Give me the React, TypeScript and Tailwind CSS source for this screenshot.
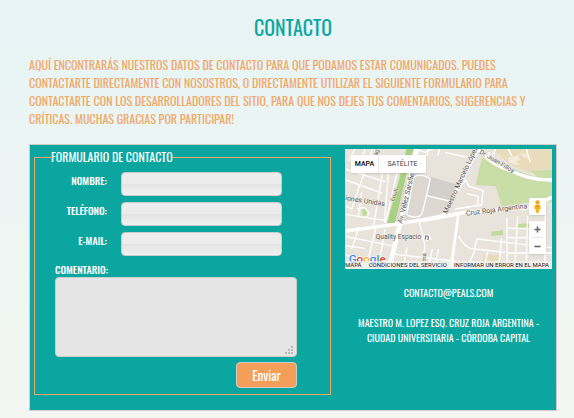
const fields = [
  { id: 'nombre', label: 'NOMBRE:', type: 'text' },
  { id: 'telefono', label: 'TELÉFONO:', type: 'tel' },
  { id: 'email', label: 'E-MAIL:', type: 'email' },
];

const gripDots = [
  [6, 0], [3, 3], [6, 3], [0, 6], [3, 6], [6, 6],
];

function StreetMap() {
  return (
    <svg viewBox="0 0 621 360" className="block h-full w-full" role="img" aria-label="Mapa de ubicación">
      <rect width="621" height="360" fill="#e8e4dc" />
      {/* university blocks */}
      <path d="M215 72 L335 108 L300 190 L215 212 L150 226 L180 100Z" fill="#dcd7d1" />
      <path d="M258 84 L335 106 L308 158 L246 140Z" fill="#d3cfca" />
      <path d="M440 0 H621 V62 L570 76 L500 50Z" fill="#e9dcbc" />
      <path d="M418 318 H462 V345 H410Z" fill="#e9dcbc" />
      {/* parks */}
      <path d="M412 20 L520 66 L621 102 V158 L540 162 L470 172 L452 112 L392 108Z" fill="#c9dea6" />
      <path d="M560 66 L621 62 V92 L580 88Z" fill="#c9dea6" />
      <path d="M168 70 H186 L150 222 H126Z" fill="#a9d184" />
      <path d="M184 0 H206 L200 18 H180Z" fill="#a9d184" />
      <path d="M440 248 L474 244 V258 L438 260Z M518 226 L552 222 V238 L516 238Z M52 180 H66 V200 H52Z" fill="#bfdc9c" />
      {/* minor streets */}
      <g fill="none" stroke="#fff" strokeWidth="4" strokeLinejoin="round">
        <path d="M30 0 L10 36 M60 0 L36 72 M82 0 L20 180 L0 170 M0 60 L120 98 M0 92 L110 132 M112 74 L84 240 M130 74 L118 220 M156 72 L122 222 M0 196 L120 214 M50 130 L40 206 M36 178 L60 176 L72 192 L64 206" />
        <path d="M0 262 L150 292 M0 290 L60 298 M38 246 L20 300 M92 240 L70 330 M0 318 L120 345 M120 240 L104 332 M170 262 L260 270 M150 316 L330 336 M222 214 L240 290 L230 360 M262 300 L250 360 M186 296 L178 340 M280 300 L270 360" />
        <path d="M206 84 Q228 70 256 90 L232 192 Q222 212 190 200 Q182 196 188 182Z M246 140 L312 156 M300 180 L362 92 L372 112 L414 124 L410 168 L330 180 M366 134 L400 142 L398 168" />
        <path d="M340 260 Q360 300 390 302 L372 345 M388 300 L396 270 L621 296 M390 300 L480 310 M430 302 L416 360 M470 268 L462 345 M486 206 L486 345 M518 202 L510 345 M548 200 L544 345 M486 238 H560 M486 266 H560 M486 312 H621 M600 190 V345" />
        <path d="M452 0 L440 26 L430 10 M212 0 L240 10 L262 0 M250 0 L246 20 M284 0 L278 20 M300 10 L390 30 M490 0 L500 20 M544 0 L556 40" />
      </g>
      <path d="M490 26 l30 -8 l6 14 l-14 6 l14 10 l-22 -2 l-14 -8Z M524 12 l22 4 l8 14 l-16 -4Z" fill="#f4ecd8" />
      {/* avenues */}
      <g fill="none" stroke="#fff" strokeLinejoin="round">
        <path d="M215 0 L176 180 L132 360" strokeWidth="14" />
        <path d="M0 246 L150 226 L290 202 L360 190 L560 176 L621 144" strokeWidth="10" />
        <path d="M150 220 L240 216 L340 198" strokeWidth="5" />
        <path d="M400 0 L292 206" strokeWidth="8" />
        <path d="M340 196 L318 360" strokeWidth="8" />
        <path d="M398 0 Q440 50 500 66 Q560 96 621 92" strokeWidth="10" />
      </g>
      {/* street names */}
      <g fontFamily="Roboto, sans-serif" fontSize="21" fill="#5c5a57" stroke="#f3f1ed" strokeWidth="2" paintOrder="stroke">
        <text transform="translate(0 153) rotate(9)">iones Unidas</text>
        <text transform="translate(148 158) rotate(-72)" fontSize="18">Friuli</text>
        <text transform="translate(171 224) rotate(-76)">Av. Vélez Sarsfield</text>
        <text transform="translate(306 196) rotate(-65)">Maestro Marcelo López</text>
        <text transform="translate(402 12) rotate(31)" fontSize="19">Dr. Juan Filloy</text>
        <text transform="translate(364 200) rotate(-7)">Cruz Roja Argentina</text>
        <text transform="translate(242 338) rotate(-86)" fontSize="18">ma</text>
        <text transform="translate(96 22) rotate(-70)" fontSize="18">ag</text>
        <text x="92" y="270" fontSize="20">Quality Espacio</text>
      </g>
      <circle cx="246" cy="265" r="10" fill="#fff" />
      <path d="M242 270 V260 L250 262 V271 M242 270 h-3 M250 271 h-3" fill="none" stroke="#666" strokeWidth="3" />
      <g fontFamily="Roboto, sans-serif" fontSize="35" fontWeight="500" stroke="#fff" strokeWidth="3" paintOrder="stroke">
        <text x="11" y="343">
          <tspan fill="#4285f4">G</tspan>
          <tspan fill="#ea4335">o</tspan>
          <tspan fill="#fbbc05">o</tspan>
          <tspan fill="#4285f4">g</tspan>
          <tspan fill="#34a853">l</tspan>
          <tspan fill="#ea4335">e</tspan>
        </text>
      </g>
    </svg>
  );
}

function MapPanel() {
  return (
    <div className="relative h-[120px] overflow-hidden font-['Roboto','Liberation_Sans',sans-serif] text-black">
      <StreetMap />
      <div className="absolute left-1.5 top-1.5 flex h-[18px] rounded-[1px] bg-white text-[7px] leading-[18px] shadow-sm">
        <button type="button" className="w-7 border-r border-gray-200 text-center font-medium">MAPA</button>
        <button type="button" className="w-[47px] text-center text-[#444]">SATÉLITE</button>
      </div>
      <button type="button" aria-label="Street View" className="absolute right-1.5 top-[49px] flex h-[17px] w-[17px] items-center justify-center rounded-[1px] bg-white shadow-sm">
        <svg viewBox="0 0 24 36" className="h-[13px] w-[9px]">
          <circle cx="12" cy="7" r="6" fill="#f0a818" />
          <path d="M4 14 H20 L21 25 H17 L16 35 H8 L7 25 H3Z" fill="#f5b324" />
          <path d="M8 15 L12 20 L16 15" fill="#c97f10" />
        </svg>
      </button>
      <div className="absolute right-1.5 top-[72px] flex w-[17px] flex-col items-center rounded-[1px] bg-white shadow-sm">
        <button type="button" aria-label="Acercar" className="flex h-4 items-center">
          <svg viewBox="0 0 8 8" className="h-[7px] w-[7px]"><path d="M4 0.5V7.5M0.5 4H7.5" stroke="#666" strokeWidth="1.8" /></svg>
        </button>
        <span className="h-px w-[11px] bg-gray-200" />
        <button type="button" aria-label="Alejar" className="flex h-4 items-center">
          <svg viewBox="0 0 8 8" className="h-[7px] w-[7px]"><path d="M0.5 4H7.5" stroke="#666" strokeWidth="1.8" /></svg>
        </button>
      </div>
      <div className="absolute inset-x-0 bottom-0 flex h-2 justify-between whitespace-nowrap bg-[#f5f5f5]/70 pr-[3px] text-[6px] leading-[8px] text-[#222]">
        <span>MAPA</span>
        <a href="#condiciones">CONDICIONES DEL SERVICIO</a>
        <a href="#error">INFORMAR UN ERROR EN EL MAPA</a>
      </div>
    </div>
  );
}

export default function App() {
  return (
    <main className="min-h-screen bg-linear-to-b from-[#e7f4f5] to-[#f3f6f2] pb-2 pl-[29px] pr-[17px] pt-3 font-['Oswald','Roboto_Condensed','Liberation_Sans',sans-serif]">
      <h1 className="text-center text-[20px] leading-[30px] text-[#0ca6a1]">CONTACTO</h1>
      <p className="mt-[14px] text-[12px] leading-[18px] text-[#f0a868]">
        AQUÍ ENCONTRARÁS NUESTROS DATOS DE CONTACTO PARA QUE PODAMOS ESTAR COMUNICADOS. PUEDES CONTACTARTE DIRECTAMENTE CON NOSOSTROS, O DIRECTAMENTE UTILIZAR EL SIGUIENTE FORMULARIO PARA CONTACTARTE CON LOS DESARROLLADORES DEL SITIO, PARA QUE NOS DEJES TUS COMENTARIOS, SUGERENCIAS Y CRÍTICAS. MUCHAS GRACIAS POR PARTICIPAR!
      </p>

      <section className="mt-4 flex gap-[14px] border border-[#ccc] bg-[#0ca6a1] p-1 pb-[15px] text-white">
        <form className="min-w-0 flex-1">
          <fieldset className="border border-[#f0a868] pb-1.5 pl-5 pr-[33px]">
            <legend className="-ml-1 text-[12px] leading-4">FORMULARIO DE CONTACTO</legend>
            <div className="pt-[7px]">
              {fields.map((field) => (
                <div key={field.id} className="mb-1.5 flex gap-[14px]">
                  <label htmlFor={field.id} className="w-[52px] whitespace-nowrap pt-px text-right text-[10px] font-medium leading-[15px]">
                    {field.label}
                  </label>
                  <input
                    id={field.id}
                    type={field.type}
                    className="h-6 w-[161px] rounded-[4px] border border-[#ccc] bg-[linear-gradient(#ececec_50%,#e3e3e3_50%,#f1f1f1)] px-2 text-[11px] text-gray-700"
                  />
                </div>
              ))}
              <label htmlFor="comentario" className="block text-[10px] font-medium leading-[15px]">COMENTARIO:</label>
              <div className="relative">
                <textarea
                  id="comentario"
                  className="block h-20 w-full resize-none rounded-[4px] border border-[#ccc] bg-[#e5e5e5] p-2 text-[11px] text-gray-700"
                />
                <svg viewBox="0 0 8 8" className="pointer-events-none absolute bottom-[3px] right-1 h-2 w-2">
                  {gripDots.map(([x, y]) => (
                    <rect key={`${x}-${y}`} x={x} y={y} width="2" height="2" fill="#bbb" />
                  ))}
                </svg>
              </div>
              <button type="submit" className="ml-auto mt-[5px] block h-[26px] w-[61px] rounded-[4px] border border-[#ccc] bg-[#f39f5a] text-[13px] leading-6">
                Enviar
              </button>
            </div>
          </fieldset>
        </form>

        <aside className="w-[207px] shrink-0">
          <MapPanel />
          <address className="mt-4 text-center text-[10px] not-italic leading-[15px]">
            <a href="mailto:contacto@peals.com">CONTACTO@PEALS.COM</a>
            <p className="mt-[15px]">MAESTRO M. LOPEZ ESQ. CRUZ ROJA ARGENTINA - CIUDAD UNIVERSITARIA - CÓRDOBA CAPITAL</p>
          </address>
        </aside>
      </section>
    </main>
  );
}
